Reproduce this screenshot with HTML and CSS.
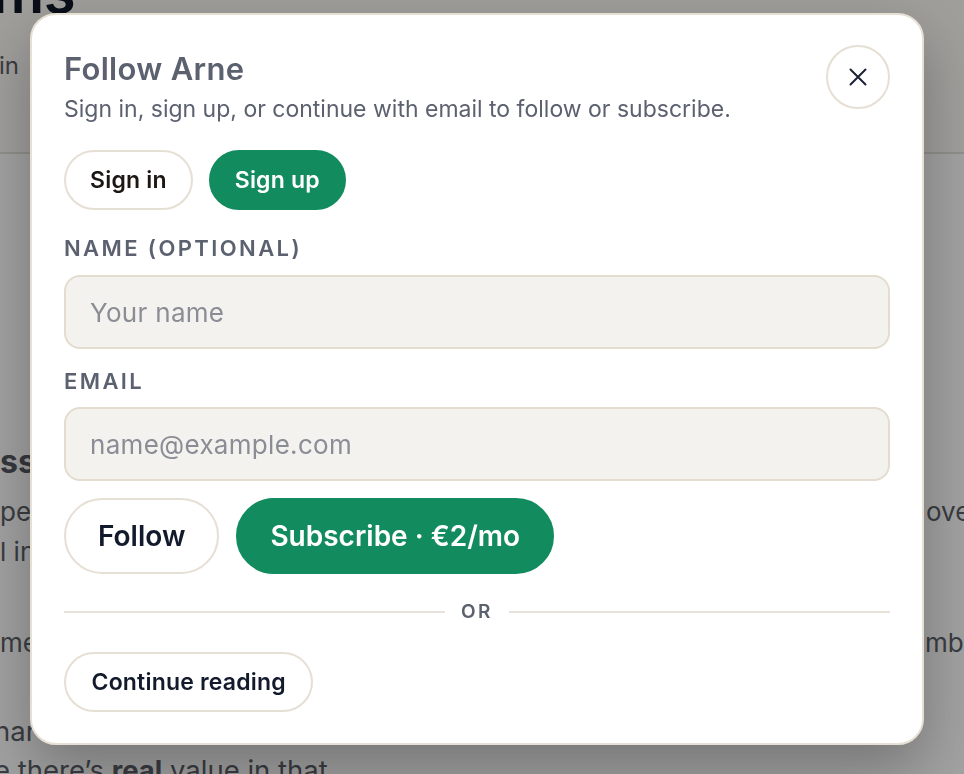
FILE: index.html
```html
<!DOCTYPE html>
<html lang="en">
<head>
<meta charset="utf-8">
<title>Follow Arne</title>
<link rel="stylesheet" href="styles.css">
</head>
<body>
<div class="page">
  <header class="page-head">
    <h1 class="page-title">ms</h1>
    <p class="page-sub">in</p>
  </header>
  <div class="page-body">
    <div class="cols">
      <div class="col col-left">
        <h2 class="bg-h2">ss</h2>
        <p class="bg-p p1">pe<br>l in</p>
        <p class="bg-p p2">me</p>
      </div>
      <div class="col col-mid"></div>
      <div class="col col-right">
        <p class="bg-p p1 first">ove<br>&nbsp;</p>
        <p class="bg-p p2">mb</p>
      </div>
    </div>
    <p class="bg-p p3">nar<br>e there’s <b>real</b> value in that.</p>
  </div>
</div>

<div class="scrim"></div>

<div class="modal" role="dialog" aria-label="Follow Arne">
  <div class="modal-head">
    <div class="head-text">
      <h2 class="title">Follow Arne</h2>
      <p class="subtitle">Sign in, sign up, or continue with email to follow or subscribe.</p>
    </div>
    <button class="close" aria-label="Close">
      <svg width="24" height="24" viewBox="0 0 24 24" fill="none" stroke="#1b2233" stroke-width="2" stroke-linecap="round"><path d="M4.5 4.5 L19.5 19.5 M19.5 4.5 L4.5 19.5"/></svg>
    </button>
  </div>

  <div class="auth-row">
    <button class="btn btn-sm btn-outline dark-warm">Sign in</button>
    <button class="btn btn-sm btn-green">Sign up</button>
  </div>

  <label class="label first-label">NAME (OPTIONAL)</label>
  <input class="field first-field" type="text" placeholder="Your name">

  <label class="label second-label">EMAIL</label>
  <input class="field second-field" type="email" placeholder="name@example.com">

  <div class="action-row">
    <button class="btn btn-lg btn-outline">Follow</button>
    <button class="btn btn-lg btn-green">Subscribe · €2/mo</button>
  </div>

  <div class="divider"><span class="line"></span><span class="or">OR</span><span class="line"></span></div>

  <button class="btn btn-sm btn-outline continue">Continue reading</button>
</div>
</body>
</html>
```

FILE: styles.css
```css
html, body {
  margin: 0;
  padding: 0;
}
body {
  font-family: Inter, "Noto Sans", "Liberation Sans", sans-serif;
  width: 964px;
  height: 774px;
  overflow: hidden;
}

/* background page */
.page {
  height: 774px;
  overflow: hidden;
  background: #ffffff;
  color: #5b5f68;
}
.page-head {
  height: 154px;
  box-sizing: border-box;
  background: #fcfaf6;
  border-bottom: 2px solid #e4e1dc;
  overflow: hidden;
}
.page-title {
  margin: -37px 0 0 -8px;
  font-size: 58px;
  line-height: 58px;
  font-weight: 600;
  color: #0e1626;
  letter-spacing: -0.5px;
}
.page-sub {
  margin: 30px 0 0 -1px;
  font-size: 24px;
  line-height: 30px;
  color: #5b5f68;
}
.cols {
  display: flex;
}
.col-left {
  width: 30px;
  overflow: hidden;
  text-align: right;
  white-space: nowrap;
  padding-top: 288px;
}
.col-mid {
  flex: 1;
}
.col-right {
  width: 39px;
  overflow: hidden;
  white-space: nowrap;
  padding-top: 338px;
}
.bg-h2 {
  margin: 0;
  font-size: 32px;
  line-height: 40px;
  font-weight: 700;
  color: #545862;
}
.bg-p {
  margin: 0;
  font-size: 26px;
  line-height: 40px;
}
.p1 {
  margin-top: 10px;
}
.p1.first {
  margin-top: 0;
  margin-left: 1px;
}
.p2 {
  margin-top: 51px;
}
.p3 {
  margin: 49px 0 0 -6px;
  font-size: 27.5px;
  line-height: 39px;
  white-space: nowrap;
}
.p3 b {
  font-weight: 700;
}

.scrim {
  position: fixed;
  inset: 0;
  background: rgba(0, 0, 0, 0.37);
}

/* modal */
.modal {
  position: fixed;
  left: 30px;
  top: 13px;
  width: 894px;
  box-sizing: border-box;
  background: #ffffff;
  border: 2px solid #e6dfd4;
  border-radius: 26px;
  padding: 30px 32px 31px;
  box-shadow: 0 24px 60px rgba(0, 0, 0, 0.28);
  display: flex;
  flex-direction: column;
  align-items: flex-start;
}
.modal-head {
  align-self: stretch;
  display: flex;
  justify-content: space-between;
  align-items: flex-start;
}
.title {
  margin: 6px 0 0;
  font-size: 31px;
  line-height: 36px;
  font-weight: 600;
  letter-spacing: 0.3px;
  color: #5c6170;
}
.subtitle {
  margin: 8px 0 0;
  font-size: 23px;
  line-height: 28px;
  color: #5c6170;
}
.close {
  width: 64px;
  height: 64px;
  flex: none;
  border-radius: 50%;
  border: 2px solid #e6dfd4;
  background: #ffffff;
  display: grid;
  place-items: center;
  padding: 0;
  cursor: pointer;
}
.close svg {
  display: block;
}

.btn {
  font-family: inherit;
  font-weight: 600;
  border-radius: 999px;
  border: 2px solid #e6dfd4;
  background: #ffffff;
  color: #121a2c;
  cursor: pointer;
  white-space: nowrap;
}
.btn-green {
  background: #128c5e;
  border-color: #128c5e;
  color: #ffffff;
}
.dark-warm {
  color: #1c1712;
}
.btn-sm {
  height: 60px;
  padding: 0 24px;
  font-size: 23px;
  letter-spacing: 0.2px;
}
.btn-lg {
  height: 76px;
  padding: 0 32px;
  font-size: 28px;
}

.auth-row {
  display: flex;
  gap: 16px;
  margin-top: 27px;
}

.label {
  font-size: 22px;
  line-height: 28px;
  font-weight: 600;
  letter-spacing: 2.4px;
  color: #5c6170;
}
.first-label {
  margin-top: 24px;
}
.second-label {
  margin-top: 18px;
}
.field {
  align-self: stretch;
  height: 74px;
  box-sizing: border-box;
  border: 2px solid #e3dccf;
  border-radius: 16px;
  background: #f4f2ee;
  padding: 0 24px;
  font-family: inherit;
  font-size: 26px;
  letter-spacing: 0.3px;
  color: #1c1712;
  outline: none;
}
.field::placeholder {
  color: #8a8d95;
}
.first-field {
  margin-top: 13px;
}
.second-field {
  margin-top: 12px;
}

.action-row {
  display: flex;
  gap: 17px;
  margin-top: 17px;
}

.divider {
  align-self: stretch;
  display: flex;
  align-items: center;
  gap: 16px;
  height: 20px;
  margin-top: 28px;
}
.divider .line {
  flex: 1;
  height: 2px;
  background: #e8e2da;
}
.or {
  font-size: 19px;
  font-weight: 600;
  letter-spacing: 2.6px;
  color: #5c6170;
  line-height: 20px;
}

.continue {
  margin-top: 30px;
  padding: 0 25.5px;
}
```
